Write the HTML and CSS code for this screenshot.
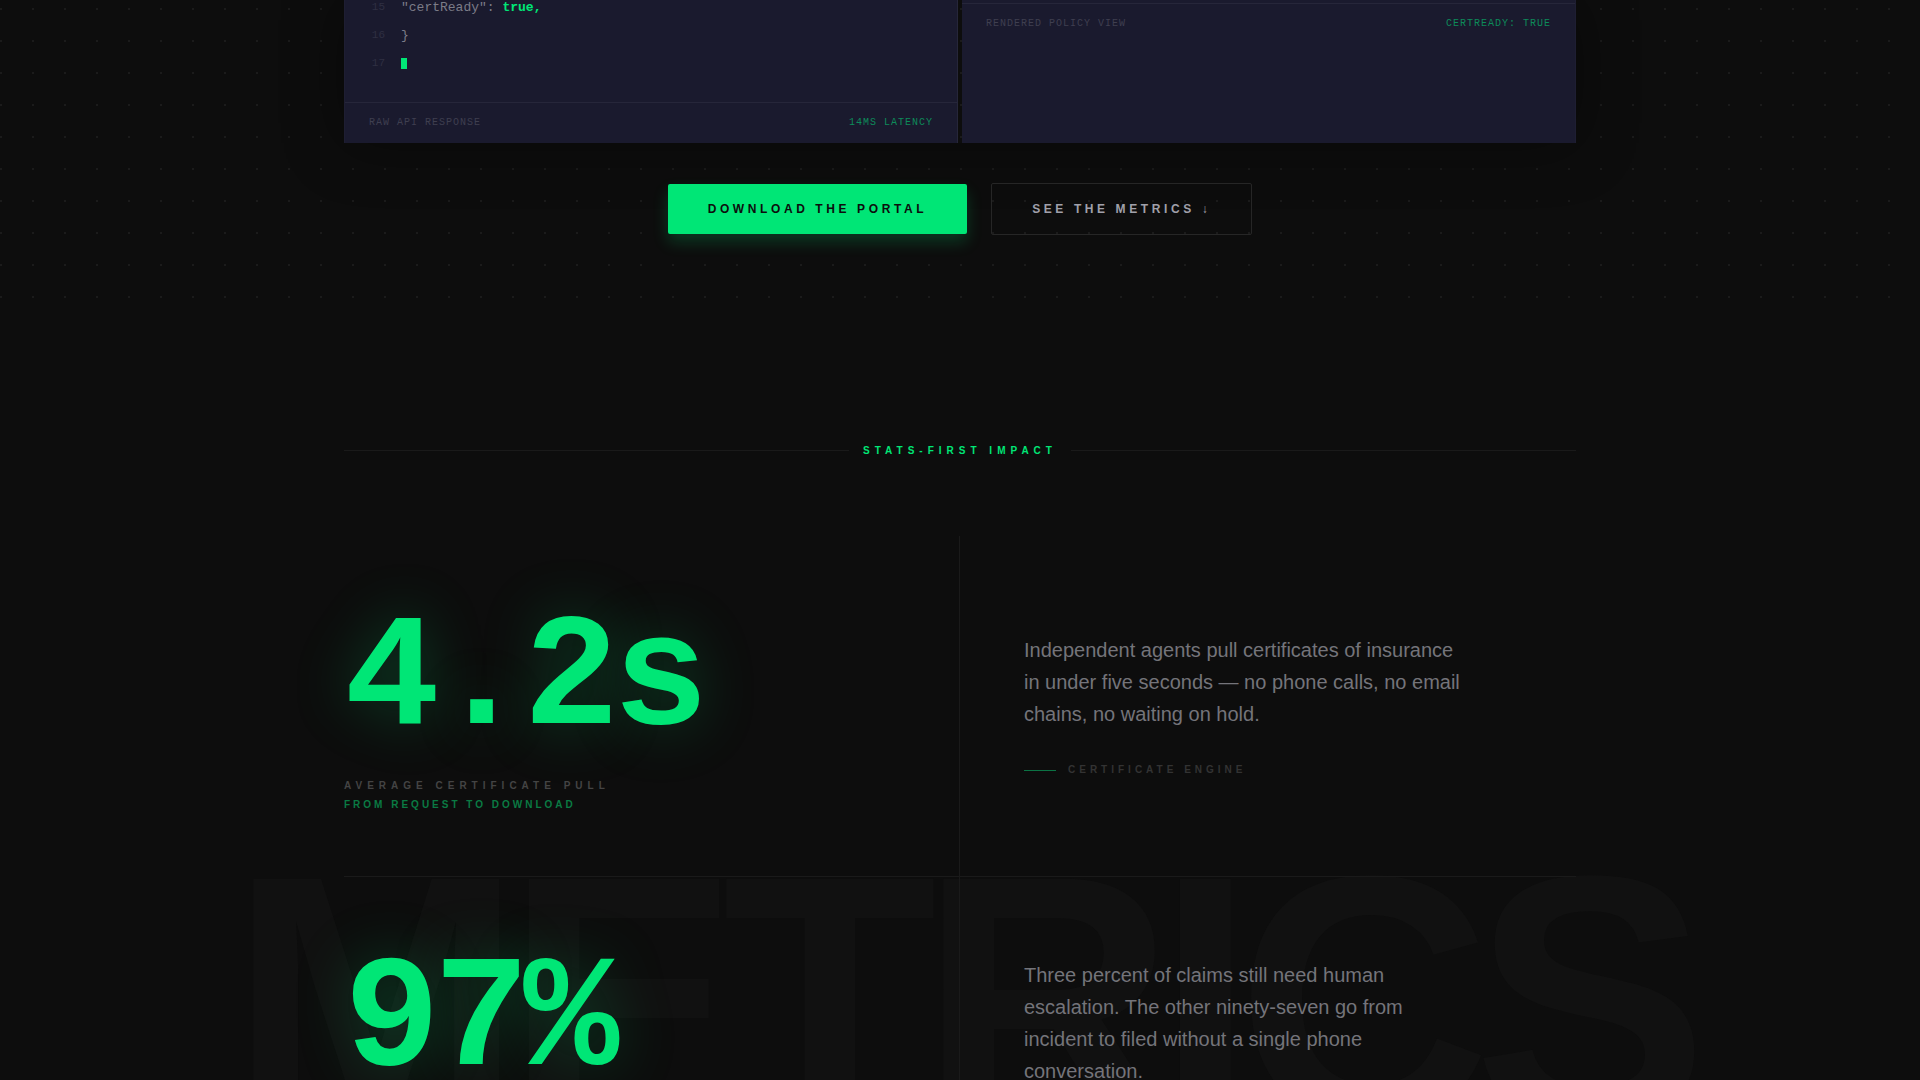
FILE: index.html
```
<!DOCTYPE html>
<html lang="en">
<head>
    <meta charset="UTF-8">
    <meta name="viewport" content="width=device-width, initial-scale=1.0">
    <title>Policy Portal</title>
    <link rel="stylesheet" href="styles.css">
</head>
<body>
    <section class="hero">
        <div class="container">
            <div class="split">
                <div class="panel panel-code">
                    <ol class="code" start="15">
                        <li class="line"><span class="num">15</span><span>"certReady": <b class="val">true,</b></span></li>
                        <li class="line"><span class="num">16</span><span>}</span></li>
                        <li class="line"><span class="num">17</span><span class="cursor"></span></li>
                    </ol>
                    <div class="panel-foot">
                        <span>RAW API RESPONSE</span>
                        <span class="ok">14MS LATENCY</span>
                    </div>
                </div>
                <div class="panel panel-view">
                    <div class="panel-foot">
                        <span>RENDERED POLICY VIEW</span>
                        <span class="ok">CERTREADY: TRUE</span>
                    </div>
                </div>
            </div>
            <div class="actions">
                <a class="btn btn-primary" href="#download">DOWNLOAD THE PORTAL</a>
                <a class="btn btn-ghost" href="#metrics">SEE THE METRICS ↓</a>
            </div>
        </div>
    </section>

    <section class="stats" id="metrics">
        <div class="watermark" aria-hidden="true">METRICS</div>
        <div class="container">
            <h2 class="stats-title">STATS-FIRST IMPACT</h2>
            <div class="stat">
                <div class="stat-left">
                    <div class="stat-number">4.2s</div>
                    <div class="stat-label">AVERAGE CERTIFICATE PULL</div>
                    <div class="stat-sub">FROM REQUEST TO DOWNLOAD</div>
                </div>
                <div class="stat-right">
                    <p class="stat-text">Independent agents pull certificates of insurance in under five seconds — no phone calls, no email chains, no waiting on hold.</p>
                    <div class="stat-tag">CERTIFICATE ENGINE</div>
                </div>
            </div>
            <div class="stat">
                <div class="stat-left">
                    <div class="stat-number">97%</div>
                    <div class="stat-label">CLAIMS SELF-SERVED</div>
                    <div class="stat-sub">WITHOUT A PHONE CALL</div>
                </div>
                <div class="stat-right">
                    <p class="stat-text">Three percent of claims still need human escalation. The other ninety-seven go from incident to filed without a single phone conversation.</p>
                    <div class="stat-tag">CLAIMS ENGINE</div>
                </div>
            </div>
        </div>
    </section>
</body>
</html>
```
FILE: styles.css
```
* {
    box-sizing: border-box;
    margin: 0;
    padding: 0;
}
html {
    overflow: hidden;
}
body {
    background: #0d0d0d;
    color: #74747a;
    font-family: "Liberation Sans", Arial, sans-serif;
    height: 100vh;
    overflow: hidden;
}
.container {
    position: relative;
    max-width: 1280px;
    margin: 0 auto;
    padding: 0 24px;
}

/* hero */
.hero {
    padding-bottom: 80px;
    background-image: radial-gradient(circle at 1px 1px, rgba(255,255,255,0.06) 1px, transparent 0);
    background-size: 32px 32px;
    background-position: 0 8px;
}
.split {
    display: grid;
    grid-template-columns: 1fr 1fr;
    gap: 4px;
    box-shadow: 0 0 60px rgba(0,0,0,0.4);
}
.panel {
    background: #1a1a2e;
    font-family: "Liberation Mono", "Courier New", monospace;
}
.panel-code {
    border-left: 1px solid #1e1e32;
    border-right: 1px solid #26263a;
}
.panel-view {
    padding-top: 3px;
    border-right: 1px solid #1e1e32;
}
.code {
    list-style: none;
    padding: 0 24px 25px;
    margin-top: -7px;
}
.line {
    display: flex;
    align-items: center;
    gap: 16px;
    height: 28px;
    font-size: 13px;
    color: #7c7c88;
}
.num {
    width: 16px;
    font-size: 11px;
    text-align: right;
    color: #2f2f42;
}
.val {
    color: #00e676;
}
.cursor {
    width: 6px;
    height: 11px;
    background: #00e676;
}
.panel-foot {
    display: flex;
    justify-content: space-between;
    padding: 13px 24px;
    border-top: 1px solid #26263a;
    font-size: 10px;
    line-height: 14px;
    letter-spacing: 1px;
    color: #3f3f50;
}
.ok {
    color: #0d8a5a;
}
.actions {
    display: flex;
    justify-content: center;
    align-items: center;
    gap: 24px;
    margin-top: 40px;
}
.btn {
    padding: 18px 40px;
    border-radius: 2px;
    font-size: 12px;
    font-weight: bold;
    line-height: 14px;
    letter-spacing: 0.3em;
    text-decoration: none;
}
.btn-primary {
    background: #00e676;
    color: #0d0d0d;
    box-shadow: 0 8px 16px rgba(0,230,118,0.2);
}
.btn-ghost {
    border: 1px solid #262626;
    color: #a0a0aa;
}

/* stats */
.stats {
    position: relative;
    padding-top: 128px;
}
.watermark {
    position: absolute;
    top: 508px;
    left: 50%;
    transform: translateX(-50%);
    font-size: 352px;
    font-weight: bold;
    line-height: 1;
    letter-spacing: -0.05em;
    color: #111111;
}
.stats-title {
    display: flex;
    align-items: center;
    gap: 14px;
    margin-bottom: 78px;
    font-size: 10px;
    line-height: 15px;
    letter-spacing: 5px;
    color: #00e676;
}
.stats-title::before,
.stats-title::after {
    content: "";
    flex: 1;
    height: 1px;
    background: #1a1a1a;
}
.stat {
    display: grid;
    grid-template-columns: 1fr 1fr;
    border-bottom: 1px solid #1a1a1a;
}
.stat-left {
    padding: 65px 0 62px;
    border-right: 1px solid #1a1a1a;
}
.stat-number {
    margin-bottom: 15px;
    font-family: "Liberation Mono", "Courier New", monospace;
    font-size: 160px;
    font-weight: bold;
    line-height: 1;
    letter-spacing: -0.04em;
    color: #00e676;
    text-shadow: 0 0 60px rgba(0,230,118,0.25);
}
.stat-label,
.stat-sub {
    font-size: 10px;
    font-weight: bold;
    line-height: 19px;
}
.stat-label {
    letter-spacing: 5px;
    color: #444444;
}
.stat-sub {
    letter-spacing: 3px;
    color: #0a7a43;
}
.stat-right {
    display: flex;
    flex-direction: column;
    justify-content: center;
    padding: 0 64px;
}
.stat-text {
    max-width: 448px;
    margin-bottom: 32px;
    font-size: 20px;
    line-height: 32px;
}
.stat-tag {
    display: flex;
    align-items: center;
    gap: 12px;
    font-size: 10px;
    font-weight: bold;
    line-height: 16px;
    letter-spacing: 4px;
    color: #333333;
}
.stat-tag::before {
    content: "";
    width: 32px;
    height: 1px;
    background: #0b7344;
}
```
